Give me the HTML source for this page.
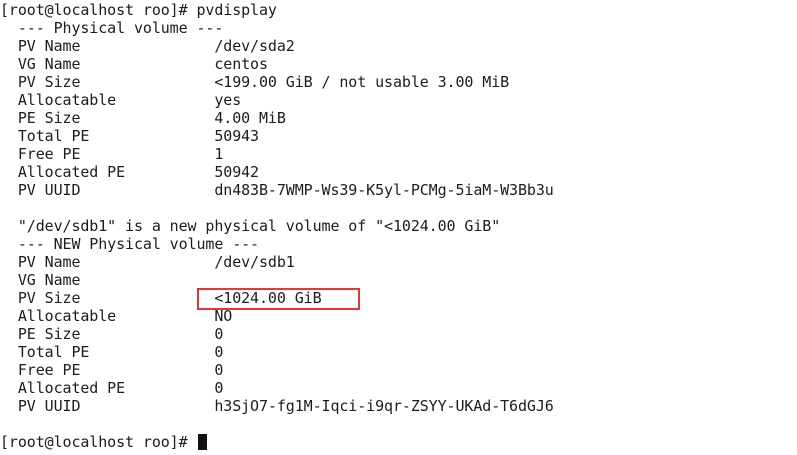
<!DOCTYPE html>
<html><head><style>
html,body{margin:0;padding:0;background:#fff;width:797px;height:455px;overflow:hidden}
pre{margin:0;position:absolute;left:0px;top:1px;font-family:"DejaVu Sans Mono","Liberation Mono",monospace;font-size:15px;letter-spacing:-0.1px;line-height:18px;color:#1c1c1c}
.box{position:absolute;left:197px;top:288px;width:159px;height:18px;border:2px solid #e8353a}
.cur{position:absolute;left:198px;top:434px;width:9px;height:16px;background:#111}
</style></head><body>
<pre>[root@localhost roo]# pvdisplay
  --- Physical volume ---
  PV Name               /dev/sda2
  VG Name               centos
  PV Size               &lt;199.00 GiB / not usable 3.00 MiB
  Allocatable           yes
  PE Size               4.00 MiB
  Total PE              50943
  Free PE               1
  Allocated PE          50942
  PV UUID               dn483B-7WMP-Ws39-K5yl-PCMg-5iaM-W3Bb3u

  "/dev/sdb1" is a new physical volume of "&lt;1024.00 GiB"
  --- NEW Physical volume ---
  PV Name               /dev/sdb1
  VG Name
  PV Size               &lt;1024.00 GiB
  Allocatable           NO
  PE Size               0
  Total PE              0
  Free PE               0
  Allocated PE          0
  PV UUID               h3SjO7-fg1M-Iqci-i9qr-ZSYY-UKAd-T6dGJ6

[root@localhost roo]# </pre>
<div class="box"></div>
<div class="cur"></div>
</body></html>
